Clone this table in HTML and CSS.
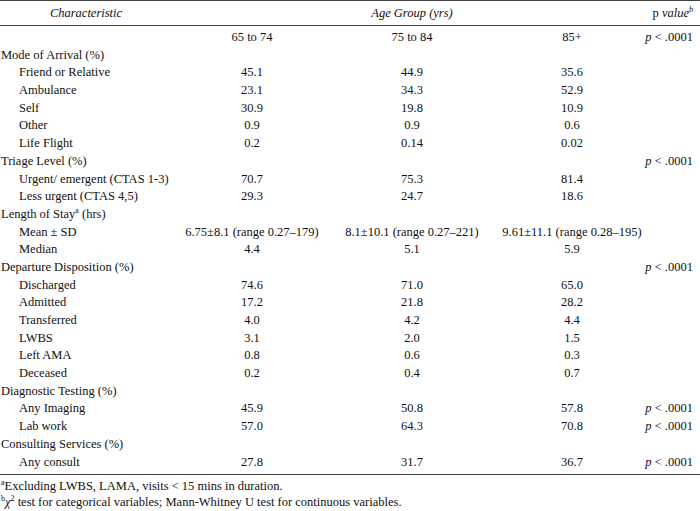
FILE: index.html
```html
<!DOCTYPE html>
<html>
<head>
<meta charset="utf-8">
<link rel="stylesheet" href="styles.css">
</head>
<body>
<div class="table">
  <div class="head">
    <div class="row hrow">
      <span class="lab center"><i>Characteristic</i></span>
      <span class="span3"><i>Age Group (yrs)</i></span>
      <span class="pv">p <i>value<sup>b</sup></i></span>
    </div>
  </div>
  <div class="body">
    <div class="row"><span class="lab"></span><span class="c1">65 to 74</span><span class="c2">75 to 84</span><span class="c3">85+</span><span class="pv"><i>p</i> &lt; .0001</span></div>
    <div class="row"><span class="lab">Mode of Arrival (%)</span></div>
    <div class="row"><span class="lab sub">Friend or Relative</span><span class="c1">45.1</span><span class="c2">44.9</span><span class="c3">35.6</span></div>
    <div class="row"><span class="lab sub">Ambulance</span><span class="c1">23.1</span><span class="c2">34.3</span><span class="c3">52.9</span></div>
    <div class="row"><span class="lab sub">Self</span><span class="c1">30.9</span><span class="c2">19.8</span><span class="c3">10.9</span></div>
    <div class="row"><span class="lab sub">Other</span><span class="c1">0.9</span><span class="c2">0.9</span><span class="c3">0.6</span></div>
    <div class="row"><span class="lab sub">Life Flight</span><span class="c1">0.2</span><span class="c2">0.14</span><span class="c3">0.02</span></div>
    <div class="row"><span class="lab">Triage Level (%)</span><span class="pv"><i>p</i> &lt; .0001</span></div>
    <div class="row"><span class="lab sub">Urgent/ emergent (CTAS 1-3)</span><span class="c1">70.7</span><span class="c2">75.3</span><span class="c3">81.4</span></div>
    <div class="row"><span class="lab sub">Less urgent (CTAS 4,5)</span><span class="c1">29.3</span><span class="c2">24.7</span><span class="c3">18.6</span></div>
    <div class="row"><span class="lab">Length of Stay<sup class="fn">a</sup> (hrs)</span></div>
    <div class="row"><span class="lab sub">Mean ± SD</span><span class="c1">6.75±8.1 (range 0.27–179)</span><span class="c2">8.1±10.1 (range 0.27–221)</span><span class="c3">9.61±11.1 (range 0.28–195)</span></div>
    <div class="row"><span class="lab sub">Median</span><span class="c1">4.4</span><span class="c2">5.1</span><span class="c3">5.9</span></div>
    <div class="row"><span class="lab">Departure Disposition (%)</span><span class="pv"><i>p</i> &lt; .0001</span></div>
    <div class="row"><span class="lab sub">Discharged</span><span class="c1">74.6</span><span class="c2">71.0</span><span class="c3">65.0</span></div>
    <div class="row"><span class="lab sub">Admitted</span><span class="c1">17.2</span><span class="c2">21.8</span><span class="c3">28.2</span></div>
    <div class="row"><span class="lab sub">Transferred</span><span class="c1">4.0</span><span class="c2">4.2</span><span class="c3">4.4</span></div>
    <div class="row"><span class="lab sub">LWBS</span><span class="c1">3.1</span><span class="c2">2.0</span><span class="c3">1.5</span></div>
    <div class="row"><span class="lab sub">Left AMA</span><span class="c1">0.8</span><span class="c2">0.6</span><span class="c3">0.3</span></div>
    <div class="row"><span class="lab sub">Deceased</span><span class="c1">0.2</span><span class="c2">0.4</span><span class="c3">0.7</span></div>
    <div class="row"><span class="lab">Diagnostic Testing (%)</span></div>
    <div class="row"><span class="lab sub">Any Imaging</span><span class="c1">45.9</span><span class="c2">50.8</span><span class="c3">57.8</span><span class="pv"><i>p</i> &lt; .0001</span></div>
    <div class="row"><span class="lab sub">Lab work</span><span class="c1">57.0</span><span class="c2">64.3</span><span class="c3">70.8</span><span class="pv"><i>p</i> &lt; .0001</span></div>
    <div class="row"><span class="lab">Consulting Services (%)</span></div>
    <div class="row"><span class="lab sub">Any consult</span><span class="c1">27.8</span><span class="c2">31.7</span><span class="c3">36.7</span><span class="pv"><i>p</i> &lt; .0001</span></div>
  </div>
  <div class="notes">
    <p><sup class="fn">a</sup>Excluding LWBS, LAMA, visits &lt; 15 mins in duration.</p>
    <p><sup class="fn">b</sup><i>χ</i><sup class="sq">2</sup> test for categorical variables; Mann-Whitney U test for continuous variables.</p>
  </div>
</div>
</body>
</html>
```
FILE: styles.css
```css
html, body {
  margin: 0;
  padding: 0;
  background: #ffffff;
}
body {
  font-family: "Liberation Serif", "Times New Roman", serif;
  font-size: 12.5px;
  color: #111111;
  width: 700px;
}
.table {
  display: flex;
  flex-direction: column;
}
.head {
  border-top: 1px solid #444;
  border-bottom: 1px solid #444;
}
.row {
  display: grid;
  grid-template-columns: 172px 160px 160px 160px 1fr;
  height: 17.7px;
  line-height: 17.7px;
  white-space: nowrap;
  padding-right: 7px;
}
.row.hrow {
  height: 24px;
  line-height: 24px;
}
.row > span {
  grid-row: 1;
}
.lab {
  grid-column: 1;
  padding-left: 1px;
}
.lab.center {
  text-align: center;
  padding-left: 0;
}
.sub {
  padding-left: 19px;
}
.c1 { grid-column: 2; text-align: center; }
.c2 { grid-column: 3; text-align: center; }
.c3 { grid-column: 4; text-align: center; }
.span3 { grid-column: 2 / 5; text-align: center; }
.pv {
  grid-column: 4 / 6;
  text-align: right;
}
sup {
  font-size: 8px;
  line-height: 0;
  vertical-align: 5px;
}
.body {
  padding: 3px 0 2.5px;
  border-bottom: 1px solid #444;
}
.notes {
  padding-top: 3px;
}
.notes p {
  margin: 0;
  line-height: 16.5px;
  padding-left: 1px;
}
.notes .sq {
  font-size: 8px;
  vertical-align: 5px;
}
```
